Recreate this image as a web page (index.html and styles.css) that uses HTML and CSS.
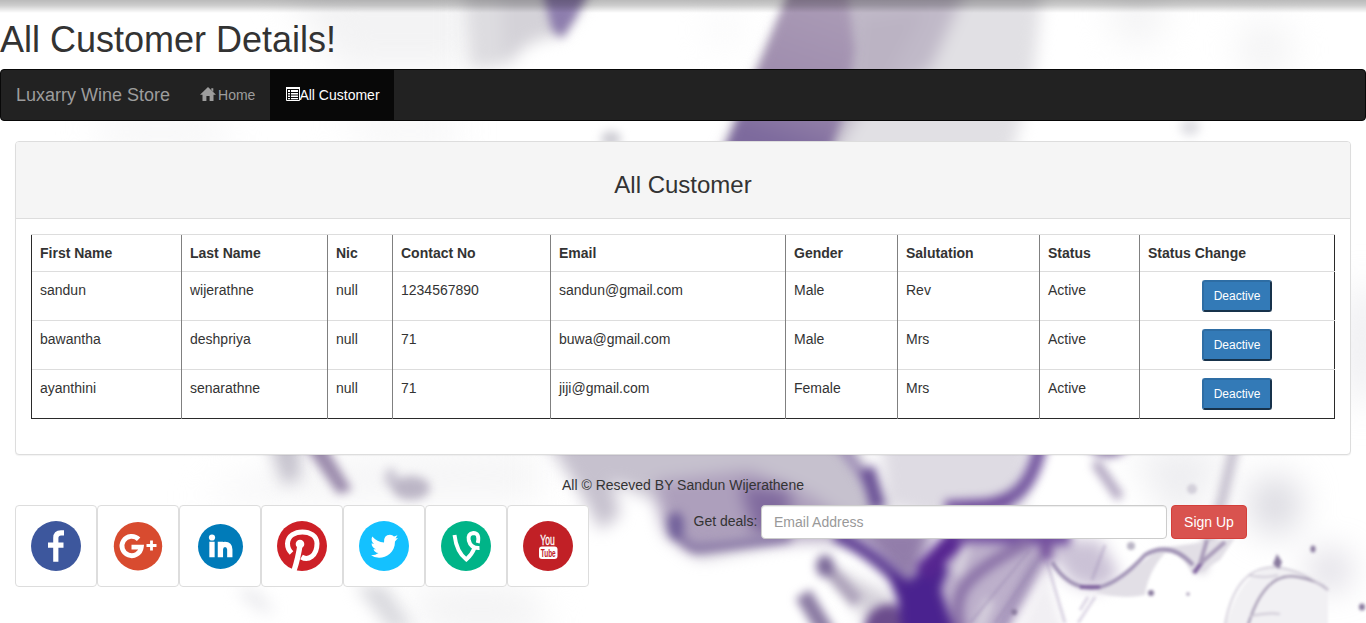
FILE: index.html
```html
<!DOCTYPE html>
<html lang="en">
<head>
<meta charset="utf-8">
<title>All Customer Details</title>
<link rel="stylesheet" href="styles.css">
</head>
<body>
<svg class="backdrop" viewBox="0 0 1366 623" aria-hidden="true">
  <defs>
    <filter id="b2" color-interpolation-filters="sRGB" x="-20%" y="-20%" width="140%" height="140%"><feGaussianBlur stdDeviation="1.5"/></filter>
    <filter id="b4" color-interpolation-filters="sRGB" filterUnits="userSpaceOnUse" x="-50" y="-50" width="1466" height="723"><feGaussianBlur stdDeviation="5"/></filter>
    <filter id="b5" color-interpolation-filters="sRGB" filterUnits="userSpaceOnUse" x="-50" y="-50" width="1466" height="723"><feGaussianBlur stdDeviation="8"/></filter>
    <filter id="b12" color-interpolation-filters="sRGB" filterUnits="userSpaceOnUse" x="-50" y="-50" width="1466" height="723"><feGaussianBlur stdDeviation="18"/></filter>
    <linearGradient id="band" gradientUnits="userSpaceOnUse" x1="850" y1="0" x2="800" y2="150">
      <stop offset="0" stop-color="#ab9cb6"/><stop offset=".6" stop-color="#9f8dae"/><stop offset="1" stop-color="#7d6a9d"/>
    </linearGradient>
    <linearGradient id="shade" x1="0" y1="0" x2="0" y2="1">
      <stop offset="0" stop-color="#000" stop-opacity=".27"/><stop offset=".4" stop-color="#000" stop-opacity=".2"/><stop offset="1" stop-color="#000" stop-opacity="0"/>
    </linearGradient>
  </defs>
  <g filter="url(#b12)" fill="#f3f3f4">
    <path d="M280 -20H470V70H340z"/><ellipse cx="1138" cy="15" rx="26" ry="30"/><ellipse cx="1265" cy="50" rx="26" ry="30"/>
    <path d="M90 120h120l30 25H110zM330 120h130v22H370z"/><ellipse cx="725" cy="30" rx="16" ry="18" fill="#f7f7f8"/>
    <ellipse cx="1275" cy="505" rx="24" ry="28" fill="#d4d3db"/><ellipse cx="1362" cy="345" rx="9" ry="65" fill="#dcdce2"/>
    <path d="M200 500Q260 450 540 450V500H260z" fill="#f5f5f6"/><path d="M410 585h120l20 50H430z"/><ellipse cx="1330" cy="570" rx="16" ry="14" fill="#bdb8c8"/>
    <path d="M1130 450h100l-50 80z" fill="#ececef"/>
  </g>
  <g filter="url(#b5)">
    <path d="M462 -20H570L558 30L520 50L495 68H470z" fill="#dddce0"/>
    <path d="M505 68L530 40L560 36L592 -10H500z" fill="#d4d2d8"/>
    <path d="M798 -15H1043L1035 65L1008 170H716L760 69z" fill="#e1e0e4"/>
    <path d="M800 -15H968L930 69L860 110L825 170H716L760 69z" fill="#c0b9c8"/>
    <path d="M862 20L925 10L885 85L855 95z" fill="#bbb3c3"/>
    <path d="M268 440L300 440L300 480L283 484z" fill="#c4c1cc"/>
    <path d="M355 585h30l30 45h-25z" fill="#d9d9de"/><path d="M235 590h20l20 22h-12z" fill="#e6e6ea"/>
    <path d="M540 430H850L870 480L890 515L900 545L800 540L700 558L666 535L655 500L612 482L620 515L600 530L585 500z" fill="#c6c1ce"/>
    <path d="M655 482L750 470L810 495L860 530L830 540L730 543L690 552L665 530z" fill="#ad9fbc"/>
    <path d="M740 485L790 490L790 540L755 535z" fill="#806a9e"/>
    <path d="M880 430H1035L1020 520L950 525L885 505z" fill="#dedbe3"/>
    <path d="M850 525L935 525L912 595z" fill="#927daa"/>
    <path d="M955 530H1070L1045 570L1000 640H940L935 595z" fill="#bdb0cb"/>
    <path d="M832 568L895 598L890 625L868 625z" fill="#d3cfd8"/>
    <path d="M1045 540H1100L1120 575L1098 590L1070 582z" fill="#cbc2d6"/>
  </g>
  <g filter="url(#b4)" fill="none">
    <path d="M796 -25H845L855 50L845 110L825 165H718L758 69z" fill="url(#band)"/>
    <path d="M541 -15H592L574 20L562 38L552 30z" fill="#8d7dad"/>
    <ellipse cx="1190" cy="127" rx="10" ry="9" fill="#dfdfe4"/><ellipse cx="611" cy="139" rx="10" ry="8" fill="#cdccd3"/>
    <path d="M300 440H322L352 490L338 494z" fill="#9b8bac"/>
    <ellipse cx="391" cy="478" rx="7" ry="10" fill="#cdc9d5"/><ellipse cx="411" cy="488" rx="19" ry="12" fill="#bcb6c6"/>
    <path d="M672 515Q676 540 696 548Q740 544 790 536" stroke="#8b7aa7" stroke-width="10"/><ellipse cx="676" cy="526" rx="8" ry="14" fill="#71609a"/>
    <path d="M835 440Q862 470 880 508" stroke="#a090b8" stroke-width="10"/><path d="M867 468L878 508" stroke="#6c5397" stroke-width="15"/>
    <path d="M835 534Q880 556 908 590" stroke="#644597" stroke-width="14"/>
    <path d="M893 578L910 584L935 558L945 570L938 590L957 650H902L901 600z" fill="#4a228f" stroke="#4f288d" stroke-width="7"/>
    <path d="M922 574L962 532" stroke="#562590" stroke-width="21"/>
    <path d="M958 508Q1000 508 1018 492T1042 435" stroke="#7558a0" stroke-width="14"/>
    <path d="M945 506L1010 503" stroke="#714e9c" stroke-width="11"/>
    <path d="M955 535L1070 538" stroke="#7350a0" stroke-width="15"/>
    <path d="M1030 542Q990 560 970 580T962 635" stroke="#8c73a8" stroke-width="12"/>
    <path d="M1046 540L1046 560" stroke="#75519c" stroke-width="12"/>
    <path d="M1038 558L998 632" stroke="#9a87b2" stroke-width="8"/>
    <path d="M966 546L957 575M990 600L978 630" stroke="#dad5e0" stroke-width="9"/>
    <path d="M824 564L858 602" stroke="#aca1b9" stroke-width="14"/><ellipse cx="825" cy="566" rx="9" ry="11" fill="#7b6998"/>
    <path d="M803 594L828 635" stroke="#8a7aa2" stroke-width="17"/>
    <path d="M863 640Q863 602 895 604L905 640z" fill="#6b4c8c"/>
    <path d="M1078 440H1134Q1112 474 1078 440z" fill="#826da0"/><path d="M1095 462L1120 498" stroke="#a89bb9" stroke-width="9"/>
    <path d="M1236 440L1222 500L1200 572" stroke="#bdb7c7" stroke-width="9"/>
    <path d="M1046 572L1015 640H1066z" fill="#f1eff3"/>
  </g>
  <g filter="url(#b2)" fill="none">
    <path d="M1095 592L1120 580L1160 548L1235 538L1220 560L1193 575Q1180 550 1165 553Q1148 572 1145 595Q1120 600 1095 592z" fill="#e2dfe6"/>
    <path d="M1052 562Q1070 592 1100 587Q1120 582 1145 555Q1170 540 1193 565" stroke="#a193b5" stroke-width="4"/>
    <path d="M1080 587L1100 587M1194 573L1202 562" stroke="#7d609c" stroke-width="4"/><path d="M1200 564L1207 540M1202 562L1225 542" stroke="#a99bb9" stroke-width="4"/>
    <path d="M1042 555L995 623M1030 550L970 623M1047 562L1065 623M1095 597L1078 623M1088 597L1080 610M1105 545L1092 580" stroke="#9583ad" stroke-width="3" opacity=".32"/>
    <path d="M1225 630Q1240 568 1275 568T1328 590V630z" fill="#f1f0f3"/>
    <path d="M1248 625Q1265 570 1298 577Q1317 580 1328 590" stroke="#978aa7" stroke-width="2"/>
    <path d="M1225 625Q1235 567 1275 567Q1300 569 1328 590M1250 616Q1270 612 1280 614M1248 575Q1265 579 1278 575" stroke="#c8c2d0" stroke-width="1.6"/>
    <g fill="#897a9e"><path d="M1277 554l5 8l-3 7l-6-5z"/><ellipse cx="1313" cy="549" rx="2.500" ry="3.500"/><circle cx="1151" cy="593" r="3"/><circle cx="1188" cy="594" r="1.500"/><circle cx="1014" cy="612" r="3"/><ellipse cx="1362" cy="607" rx="3" ry="3.500"/></g>
    <circle cx="1131" cy="546" r="4" fill="#bab5c5"/><circle cx="1192" cy="489" r="5" fill="#d3d0da"/>
  </g>
  <rect width="1366" height="13" fill="url(#shade)"/>
</svg>

<h1 class="page-title">All Customer Details!</h1>
<nav class="navbar">
  <a class="brand">Luxarry Wine Store</a>
  <a class="nav-link"><svg class="home-icon" width="16" height="14" viewBox="0 0 16 14"><path d="M8 0L16 7.8H13.5V14H9.6V9H6.4V14H2.5V7.8H0zM11.3 1.2h2v3.5l-2-2z" fill="currentColor"/></svg>Home</a>
  <a class="nav-link active"><svg class="list-icon" width="14" height="14" viewBox="0 0 14 14"><path d="M.5.5h13v13H.5z" fill="none" stroke="currentColor"/><path d="M0 0h14v2H0zM2 3h2v2H2zM5 3h7v2H5zM2 6h2v1.5H2zM5 6h7v1.5H5zM2 8.5h2V10H2zM5 8.5h7V10H5zM2 11h2v1.3H2zM5 11h7v1.3H5z" fill="currentColor"/></svg>All Customer</a>
</nav>

<main class="container">
  <section class="panel">
    <header class="panel-heading"><h3>All Customer</h3></header>
    <div class="panel-body">
      <table class="customers">
        <colgroup><col class="c-first"><col class="c-last"><col class="c-nic"><col class="c-contact"><col class="c-email"><col class="c-gender"><col class="c-salutation"><col class="c-status"><col></colgroup>
        <thead><tr><th>First Name</th><th>Last Name</th><th>Nic</th><th>Contact No</th><th>Email</th><th>Gender</th><th>Salutation</th><th>Status</th><th>Status Change</th></tr></thead>
        <tbody>
          <tr><td>sandun</td><td>wijerathne</td><td>null</td><td>1234567890</td><td>sandun@gmail.com</td><td>Male</td><td>Rev</td><td>Active</td><td class="action"><button class="btn-change">Deactive</button></td></tr>
          <tr><td>bawantha</td><td>deshpriya</td><td>null</td><td>71</td><td>buwa@gmail.com</td><td>Male</td><td>Mrs</td><td>Active</td><td class="action"><button class="btn-change">Deactive</button></td></tr>
          <tr><td>ayanthini</td><td>senarathne</td><td>null</td><td>71</td><td>jiji@gmail.com</td><td>Female</td><td>Mrs</td><td>Active</td><td class="action"><button class="btn-change">Deactive</button></td></tr>
        </tbody>
      </table>
    </div>
  </section>

  <footer>
    <p class="copyright">All © Reseved BY Sandun Wijerathene</p>
    <div class="footer-row">
      <div class="social">
        <a class="tile"><svg viewBox="0 0 50 50"><circle cx="25" cy="25" r="25" fill="#3d579d"/><path d="M33 11.8H30Q24.8 11.8 24.8 17V40.8M17 24.2H32.5" fill="none" stroke="#fff" stroke-width="5.2"/></svg></a>
        <a class="tile"><svg viewBox="0 0 50 50"><circle cx="25" cy="25.2" r="24.2" fill="#d84b2f"/><path d="M25.6 18.2A9.7 9.7 0 1 0 28.3 26.2H18.5" fill="none" stroke="#fff" stroke-width="4.8"/><path d="M38.5 19.5v10M33.5 24.5h10" stroke="#fff" stroke-width="2.8"/></svg></a>
        <a class="tile"><svg viewBox="0 0 50 50"><circle cx="25.5" cy="25.5" r="22.5" fill="#007bb9"/><circle cx="17" cy="16.5" r="3.1" fill="#fff"/><path d="M17 20.8V36.2M25.4 36.2V20.8M25.400 28.5Q25.4 23.3 30 23.3T34.8 28.5V36.2" fill="none" stroke="#fff" stroke-width="5.300"/></svg></a>
        <a class="tile"><svg viewBox="0 0 50 50"><circle cx="25" cy="25" r="25" fill="#cd2027"/><path d="M14.5 32Q10.5 28 10.5 22.5C11 7 40 7 40 22.5C40 35 31 40 24.5 36" fill="none" stroke="#fff" stroke-width="5"/><path d="M23.5 21Q21 38 17 49.5" fill="none" stroke="#fff" stroke-width="5.3"/><circle cx="23" cy="23" r="4.3" fill="#fff"/></svg></a>
        <a class="tile"><svg viewBox="0 0 50 50"><circle cx="25" cy="25" r="25" fill="#14c1ff"/><path d="M39 17l-3 3.6C36 32 27 37 20 36.8Q15 36.5 12 34.2Q16.5 34.3 19.5 32Q15.5 31.5 14.5 28.2H17Q12.5 26.5 12.6 22.3L15 23Q11.2 19.5 13.3 15.5Q18 21 25 21.5Q24.5 14 31 13.8Q33.5 14 35 15.5L38.5 14.3L36.5 17.5z" fill="#fff"/></svg></a>
        <a class="tile"><svg viewBox="0 0 50 50"><circle cx="25" cy="25" r="25" fill="#00b488"/><path d="M13.5 14Q15.5 31 25.3 38.5Q31 33.5 33.5 27M36.8 22Q39 12 32.3 12Q26.5 12.5 27.8 19.5Q29.8 27.5 38.5 27" fill="none" stroke="#fff" stroke-width="3.9"/></svg></a>
        <a class="tile"><svg viewBox="0 0 50 50"><circle cx="25" cy="25" r="25" fill="#c12026"/><rect x="16" y="25.5" width="18.5" height="12.5" rx="3" fill="#fff"/><text class="yt" x="17.3" y="23.8" textLength="14.5" lengthAdjust="spacingAndGlyphs" fill="#fff">You</text><text class="yt yt-tube" x="17.7" y="35.7" textLength="15" lengthAdjust="spacingAndGlyphs" fill="#c12026">Tube</text></svg></a>
      </div>
      <form class="deals"><label for="deal-email">Get deals:</label><input id="deal-email" type="email" placeholder="Email Address"><button type="button" class="btn-signup">Sign Up</button></form>
    </div>
  </footer>
</main>
</body>
</html>
```
FILE: styles.css
```css
* { box-sizing: border-box; }
html { overflow: hidden; }
body {
  margin: 0;
  background: #fff;
  color: #333;
  font: 14px/20px "Liberation Sans", Arial, sans-serif;
}
.backdrop { position: absolute; top: 0; left: 0; width: 1366px; height: 623px; z-index: -1; }
.page-title { margin: 0; padding: 20px 0 10px; height: 69px; font-size: 36px; line-height: 39.6px; font-weight: normal; }
.navbar {
  display: flex;
  height: 52px;
  margin-bottom: 20px;
  background: #222;
  border: 1px solid #080808;
  border-radius: 4px;
  color: #9d9d9d;
}
.brand { padding: 15px; font-size: 18px; }
.nav-link { padding: 15px 14.5px 15px 15px; white-space: nowrap; }
.nav-link.active { padding-left: 16px; padding-right: 14px; background: #080808; color: #fff; }
.home-icon { margin-right: 2px; vertical-align: -1px; }
.list-icon { margin-right: -.5px; vertical-align: -1px; }
.container { padding: 0 15px; }
.panel { background: #fff; border: 1px solid #ddd; border-radius: 4px; box-shadow: 0 1px 1px rgba(0,0,0,.05); height: 314px; margin-bottom: 20px; }
.panel-heading { height: 77px; padding: 30px 15px 20px; background: #f5f5f5; border-bottom: 1px solid #ddd; border-radius: 3px 3px 0 0; text-align: center; }
.panel-heading h3 { margin: 0; font-size: 24px; line-height: 26.4px; font-weight: normal; }
.panel-body { padding: 15px; }
.customers { width: 1304px; table-layout: fixed; border-collapse: collapse; border: 1px solid #2a2a2a; }
.customers th, .customers td {
  padding: 8px;
  text-align: left;
  vertical-align: top;
  border-left: 1px solid #808080;
  border-top: 1px solid #ddd;
}
.customers th:first-child, .customers td:first-child { border-left-color: #2a2a2a; }
.customers tbody tr { height: 49px; }
.c-first { width: 150px; }
.c-last { width: 146px; }
.c-nic { width: 65px; }
.c-contact { width: 158px; }
.c-email { width: 235px; }
.c-gender { width: 112px; }
.c-salutation { width: 142px; }
.c-status { width: 100px; }
.customers td.action { text-align: center; line-height: 0; }
.btn-change {
  width: 70px;
  height: 32px;
  padding: 0;
  border: 2px solid;
  border-color: #2e6da4 #17324b #17324b #2e6da4;
  border-radius: 3px;
  background: #337ab7;
  color: #fff;
  font: 12px/18px "Liberation Sans", Arial, sans-serif;
}
.copyright { margin: 0 0 10px; text-align: center; }
.footer-row { display: flex; align-items: flex-start; }
.social { display: flex; width: 678.5px; }
.tile { display: block; width: 82px; height: 82px; padding: 15px; background: #fff; border: 1px solid #ddd; border-radius: 4px; }
.tile svg { display: block; width: 50px; height: 50px; }
.yt { font: 14px "Liberation Sans", Arial, sans-serif; stroke: #fff; stroke-width: .3px; }
.yt-tube { font-size: 10.5px; font-weight: bold; stroke: none; }
.deals { display: flex; }
.deals label { width: 67.5px; padding-top: 6px; white-space: nowrap; }
.deals input {
  width: 406px;
  height: 34px;
  margin-right: 4px;
  padding: 6px 12px;
  border: 1px solid #ccc;
  border-radius: 4px;
  background: #fff;
  box-shadow: inset 0 1px 1px rgba(0,0,0,.075);
  font: 14px/20px "Liberation Sans", Arial, sans-serif;
}
.deals input::placeholder { color: #999; }
.btn-signup { width: 76px; height: 34px; padding: 0; border: 1px solid #d43f3a; border-radius: 4px; background: #d9534f; color: #fff; font: 14px/20px "Liberation Sans", Arial, sans-serif; }
```
